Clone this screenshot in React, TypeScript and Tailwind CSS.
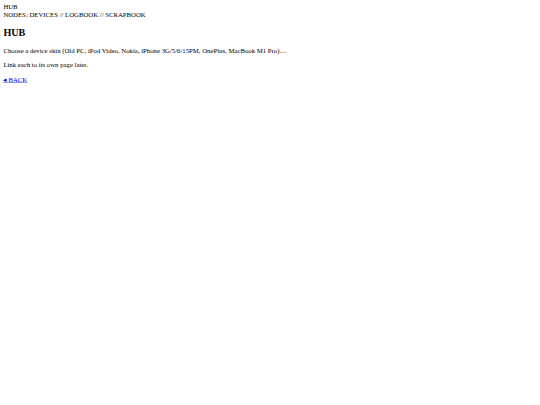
import React from "react";

export default function App() {
  return (
    <div className="w-[540px] h-[405px] overflow-hidden bg-white">
      <div className="w-[1280px] origin-top-left scale-[0.421875] p-2 text-[16px] leading-[normal] text-black font-['Liberation_Serif','Times_New_Roman',serif]">
        <div>HUB</div>
        <div>NODES: DEVICES // LOGBOOK // SCRAPBOOK</div>
        <h2 className="text-[24px] font-bold my-[19.92px]">HUB</h2>
        <p className="my-4">
          Choose a device skin (Old PC, iPod Video, Nokia, iPhone 3G/5/6/15PM, OnePlus, MacBook M1 Pro)…
        </p>
        <p className="my-4">Link each to its own page later.</p>
        <p className="my-4">
          <a href="#" className="text-[#0000EE] underline">◂ BACK</a>
        </p>
      </div>
    </div>
  );
}
